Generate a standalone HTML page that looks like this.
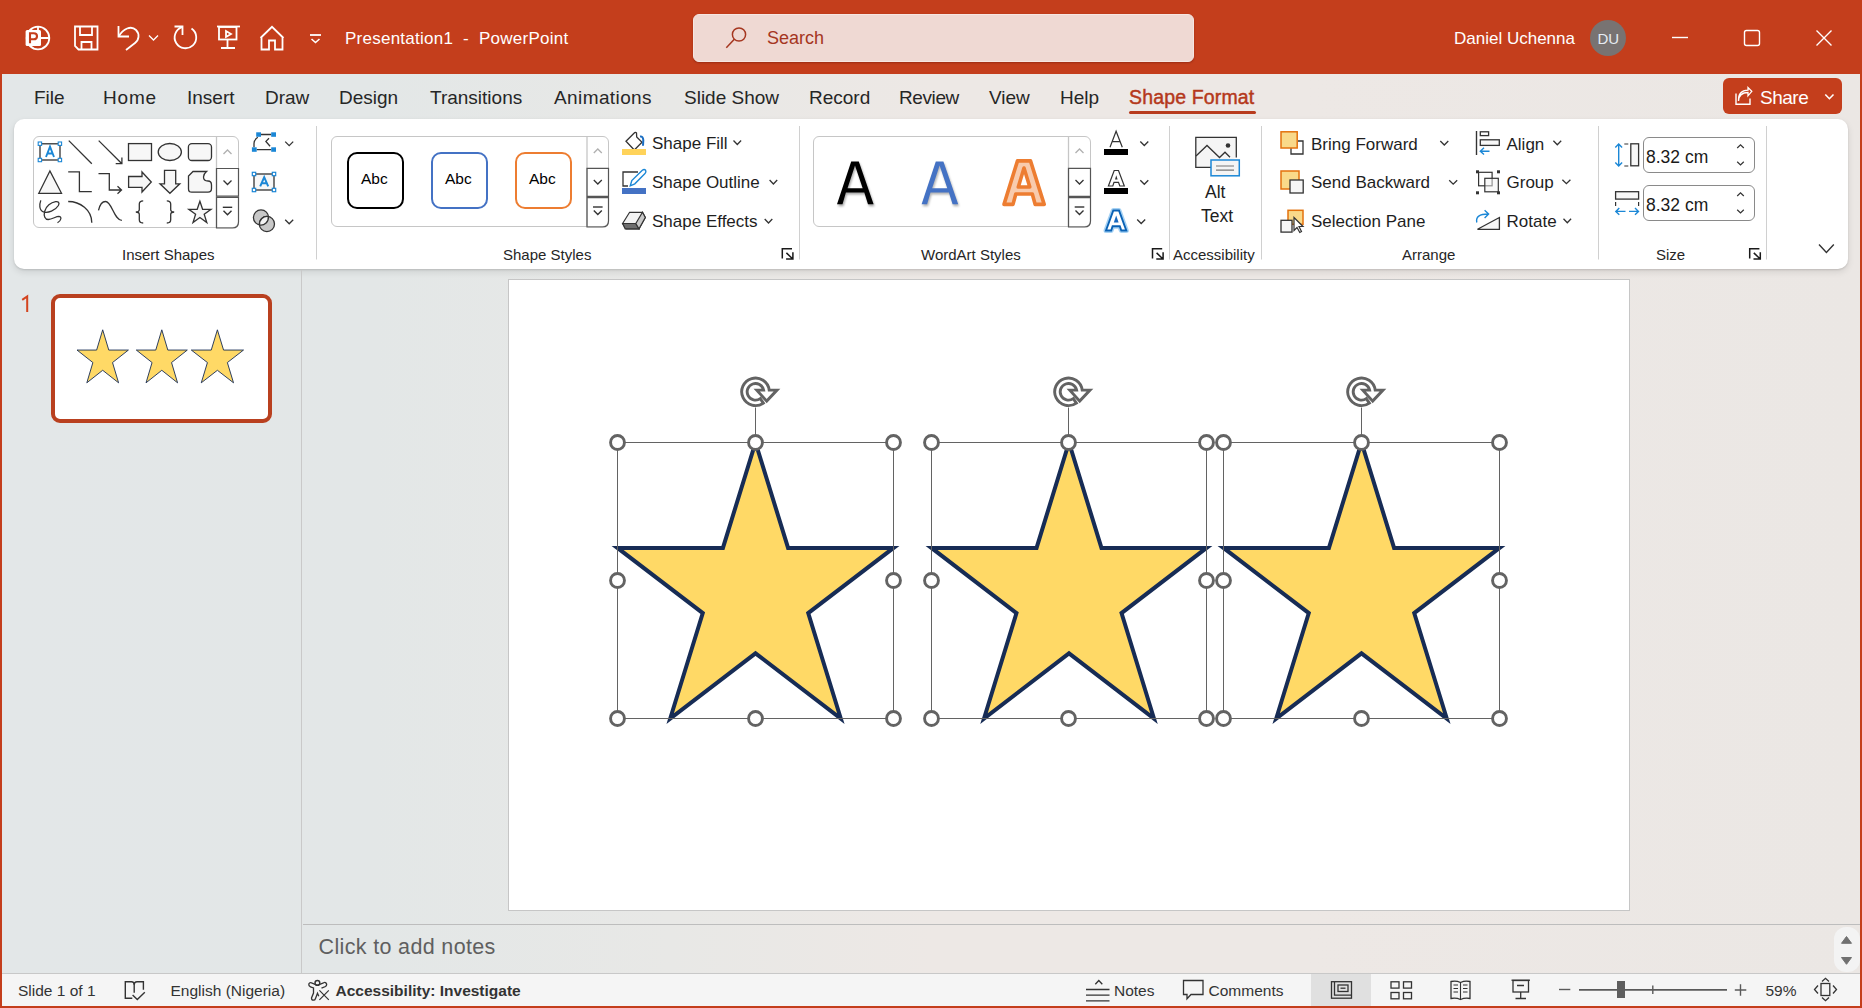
<!DOCTYPE html>
<html><head><meta charset="utf-8">
<style>
*{margin:0;padding:0;box-sizing:border-box}
html,body{width:1862px;height:1008px;overflow:hidden}
body{position:relative;font-family:"Liberation Sans",sans-serif;background:linear-gradient(90deg,#e3e7e8 0%,#e3e7e7 20%,#e8e8e6 36%,#ede8e5 50%,#ede8e5 70%,#ebe7e4 100%);color:#262626}
.a{position:absolute}
.t{position:absolute;white-space:nowrap;line-height:1}
#title{left:0;top:0;width:1862px;height:74px;background:#c43e1c}
.wt{color:#fff}
.tab{font-size:19px;color:#262626;top:88px}
svg{position:absolute;overflow:visible}
.lbl{font-size:15px;color:#262626}
.btn{font-size:17px;color:#1e1e1e}
.st{font-size:15.5px;color:#333}
</style></head><body>
<!-- title bar -->
<div id="title" class="a"></div>
<div class="a" style="left:0;top:0;width:2px;height:1008px;background:#c43e1c"></div>
<div class="a" style="left:1860px;top:0;width:2px;height:1008px;background:#c43e1c"></div>
<div class="a" style="left:0;top:1006px;width:1862px;height:2px;background:#c43e1c"></div>

<!-- QAT icons -->
<svg style="left:0;top:0" width="1862" height="74" fill="none" stroke="#fff" stroke-width="1.8">
  <!-- ppt logo -->
  <circle cx="38" cy="38" r="11.3"/>
  <path d="M38 26.7V38H49.3" />
  <rect x="25.6" y="30" width="15.4" height="16" rx="1.5" fill="#fff" stroke="none"/>
  <path d="M30 43.3V33.2H33.8Q37 33.2 37 36.2Q37 39.3 33.8 39.3H30" stroke="#c43e1c" stroke-width="2.1"/>
  <!-- save -->
  <path d="M75 26.5H97.5V49.5H78.5L75 46Z"/>
  <path d="M80 26.5V35H92V26.5"/>
  <path d="M81.5 49.5V42H91.5V49.5"/>
  <!-- undo -->
  <path d="M118.5 26V36.5H129"/>
  <path d="M119 36C123 29 131 25 136 30C140 34 139 40 135 43L126 50"/>
  <path d="M149 35.5L153.5 40L158 35.5" stroke-width="1.3"/>
  <!-- redo -->
  <path d="M174.5 26.5H182.5V35"/>
  <path d="M182 27.2A10.8 10.8 0 1 0 191.5 28.5"/>
  <!-- present -->
  <path d="M217 26.5H240"/>
  <rect x="219" y="27" width="17.5" height="12.5"/>
  <path d="M227.5 39.5V48M221 48H235"/>
  <path d="M226 31V37L231 34Z"/>
  <!-- home -->
  <path d="M260.5 38L272 26.8L283.5 38M261.5 37V49.5H269V40.5H275V49.5H282.5V37"/>
  <!-- customize -->
  <path d="M310 35H321" stroke-width="1.8"/>
  <path d="M311.5 39L315.5 42.5L319.5 39" stroke-width="1.6"/>
</svg>
<div class="t wt" style="left:345px;top:30px;font-size:17px;letter-spacing:0.25px">Presentation1&nbsp;&nbsp;-&nbsp;&nbsp;PowerPoint</div>

<!-- search -->
<div class="a" style="left:693px;top:14px;width:501px;height:48px;border-radius:6px;background:#efd9d3;border:1px solid #f6e6e2;box-shadow:0 1px 2px rgba(60,0,0,0.3)"></div>
<svg style="left:0;top:0" width="1" height="1" fill="none" stroke="#a5361f" stroke-width="1.5">
  <circle cx="739" cy="34.5" r="6.6"/>
  <path d="M734.3 39.2L726.3 47.7"/>
</svg>
<div class="t" style="left:767px;top:29px;font-size:18px;color:#a5361f">Search</div>

<div class="t wt" style="left:1454px;top:30px;font-size:17px">Daniel Uchenna</div>
<div class="a" style="left:1590px;top:20px;width:36px;height:36px;border-radius:50%;background:#787372"></div>
<div class="t" style="left:1597.5px;top:30.9px;font-size:15px;color:#e6ecf2">DU</div>
<svg style="left:0;top:0" width="1" height="1" fill="none" stroke="#fff" stroke-width="1.4">
  <path d="M1672 37.5H1688"/>
  <rect x="1744.5" y="30.5" width="15" height="15" rx="2"/>
  <path d="M1816.5 30.5L1831.5 45.5M1831.5 30.5L1816.5 45.5"/>
</svg>

<!-- tabs -->
<div class="t tab" style="left:34px">File</div>
<div class="t tab" style="left:103px;letter-spacing:0.8px">Home</div>
<div class="t tab" style="left:187px">Insert</div>
<div class="t tab" style="left:265px">Draw</div>
<div class="t tab" style="left:339px">Design</div>
<div class="t tab" style="left:430px">Transitions</div>
<div class="t tab" style="left:554px;letter-spacing:0.4px">Animations</div>
<div class="t tab" style="left:684px">Slide Show</div>
<div class="t tab" style="left:809px">Record</div>
<div class="t tab" style="left:899px;letter-spacing:-0.4px">Review</div>
<div class="t tab" style="left:989px">View</div>
<div class="t tab" style="left:1060px">Help</div>
<div class="t tab" style="left:1129px;top:88.4px;font-size:19.5px;color:#b5381b;-webkit-text-stroke:0.45px #b5381b;letter-spacing:0.15px">Shape Format</div>
<div class="a" style="left:1129px;top:111px;width:127px;height:3px;border-radius:2px;background:#b83b1d"></div>


<!-- RIBBON -->
<div id="ribbon" class="a" style="left:14px;top:119px;width:1834px;height:150px;background:#fff;border-radius:10px;box-shadow:0 1px 2px rgba(0,0,0,0.12),0 3px 7px rgba(0,0,0,0.10)"></div>

<!-- RIB1 -->
<!-- Insert shapes group -->
<div class="a" style="left:33px;top:136px;width:206px;height:92px;border:1px solid #c6c6c6;border-radius:6px;background:#fff"></div>
<svg style="left:0;top:0" width="1" height="1" fill="none" stroke="#333" stroke-width="1.3">
  <!-- scroll column -->
  <path d="M216.5 136.5V228" stroke="#c6c6c6"/>
  <path d="M216.5 168.5H238.5V196.20000000000002H216.5Z" stroke="#555" stroke-width="1.2"/>
  <path d="M216.5 197.4H238.5V222Q238.5 228 232.5 228H216.5Z" stroke="#555" stroke-width="1.2"/>
  <path d="M223.5 154L227.5 150L231.5 154" stroke="#b0b0b0" stroke-width="1.3"/>
  <path d="M223.5 180.5L227.5 184.5L231.5 180.5" stroke="#333" stroke-width="1.3"/>
  <path d="M222.8 207.3H232.2" stroke="#333" stroke-width="1.4"/>
  <path d="M223.5 210.8L227.5 214.8L231.5 210.8" stroke="#333" stroke-width="1.4"/>
  <!-- row0 -->
  <rect x="40" y="143.8" width="20" height="16.2" stroke="#333" stroke-width="1.3"/>
  <g fill="#fff" stroke="#1b87d6" stroke-width="1.1">
    <rect x="38.2" y="142" width="3.4" height="3.4"/><rect x="58.2" y="142" width="3.4" height="3.4"/>
    <rect x="38.2" y="158.3" width="3.4" height="3.4"/><rect x="58.2" y="158.3" width="3.4" height="3.4"/>
  </g>
  <path d="M46 157L50 146.6L54 157M47.4 153.5H52.6" stroke="#1b87d6" stroke-width="1.9"/>
  <path d="M68.8 140.6L91.8 163.7"/>
  <path d="M98.7 140.6L121.9 163.7M121.9 157.5V163.7H115.7"/>
  <rect x="128.5" y="143.6" width="23" height="16.9" fill="#f7f7f7"/>
  <ellipse cx="169.8" cy="152" rx="11.6" ry="8.5" fill="#f7f7f7"/>
  <rect x="188.4" y="143.6" width="23.1" height="16.9" rx="3.5" fill="#f7f7f7"/>
  <!-- row1 -->
  <path d="M49.9 171L38.8 193.3H61.5Z" fill="#f7f7f7"/>
  <path d="M68.2 171.9H79.4V191.7H91.8"/>
  <path d="M98.5 173.7H109.3V190H121.5M117.5 186.3L121.5 190L117.5 193.7"/>
  <path d="M128.6 176.5H142V172L151.3 182L142 192V187.3H128.6Z" fill="#f7f7f7"/>
  <path d="M164.5 170.3H175.7V183.8H179.8L169.9 193.3L160 183.8H164.5Z" fill="#f7f7f7"/>
  <path d="M193 171.5H206.5Q203.5 174 203.5 177Q203.5 181 208 181Q211.5 181 211.5 185V188.5Q211.5 192.2 208 192.2H191.8Q188.5 192.2 188.5 189V176Z" fill="#f7f7f7"/>
  <!-- row2 -->
  <path d="M40.8 200.4C39.5 204 38.5 210.5 44.2 212.2C48 213 55 211 58.4 205.5C60 202.5 58 201.3 55.6 201.7C51 202.5 46 206 44.6 211.5C43.5 216 45 219.5 48.3 219.5C52 219.5 56 216.3 58.8 216.3C62 216.5 61.5 220.5 57.5 222.7"/>
  <path d="M68.2 201.5C80 201.5 91.8 210 91.8 222.7"/>
  <path d="M98.5 210.3C100 204 103 201.5 105.5 201.5C112 201.5 114 220.4 121.9 220.4"/>
  <path d="M143.2 200.8Q139.3 200.8 139.3 204V209.5Q139.3 212 135.8 212Q139.3 212 139.3 214.5V219.8Q139.3 223 143.2 223"/>
  <path d="M166.8 200.8Q170.7 200.8 170.7 204V209.5Q170.7 212 174.2 212Q170.7 212 170.7 214.5V219.8Q170.7 223 166.8 223"/>
  <path d="M199.9 201.2L202.6 209.3H211L204.2 214.3L206.8 222.6L199.9 217.5L193 222.6L195.6 214.3L188.8 209.3H197.2Z" fill="#f7f7f7"/>
  <!-- edit shape -->
  <path d="M261 134.5H271.2M256.7 149.6H271.2M257.8 137.3Q254 140 254 143.5V147.3M269 138.2L265.9 141.4L270.1 146.2" stroke="#333" stroke-width="1.3"/>
  <g fill="#1b87d6" stroke="none">
    <rect x="256.2" y="132.3" width="4.8" height="4.5"/><rect x="271.2" y="132.3" width="4.8" height="4.5"/>
    <rect x="251.9" y="147.3" width="4.8" height="4.5"/><rect x="271.2" y="147.3" width="4.8" height="4.5"/>
  </g>
  <path d="M285.2 141.6L289.2 145.6L293.2 141.6"/>
  <!-- text box -->
  <rect x="254" y="174" width="20" height="16" fill="#f7f7f7" stroke="#333" stroke-width="1.3"/>
  <g fill="#fff" stroke="#1b87d6" stroke-width="1.2">
    <rect x="252.3" y="172.3" width="3.4" height="3.4"/><rect x="272.3" y="172.3" width="3.4" height="3.4"/>
    <rect x="252.3" y="188.3" width="3.4" height="3.4"/><rect x="272.3" y="188.3" width="3.4" height="3.4"/>
  </g>
  <path d="M260.2 186.4L264.2 177.2L268.2 186.4M261.6 183.3H266.8" stroke="#1b87d6" stroke-width="2"/>
  <!-- merge shapes -->
  <circle cx="261" cy="217.5" r="7.6" fill="#c8c8c8" stroke="#333" stroke-width="1.3"/>
  <circle cx="266.9" cy="224" r="7.6" fill="#c8c8c8" stroke="#333" stroke-width="1.3"/>
  <path d="M268.3 216.5A7.6 7.6 0 0 1 259.6 225A7.6 7.6 0 0 1 268.3 216.5Z" fill="#f3f3f3" stroke="#333" stroke-width="1.3"/>
  <path d="M285.2 219.8L289.2 223.8L293.2 219.8"/>
  <!-- separator -->
  <path d="M316.5 126V259.5" stroke="#d0d0d0" stroke-width="1"/>
</svg>
<div class="t lbl" style="left:122px;top:247px">Insert Shapes</div>
<!-- /RIB1 -->
<!-- RIB2 -->
<!-- Shape styles group -->
<div class="a" style="left:331px;top:136px;width:278px;height:91px;border:1px solid #c6c6c6;border-radius:6px;background:#fff"></div>
<div class="a" style="left:346.5px;top:152.3px;width:57px;height:57px;border:2.3px solid #000;border-radius:10px"></div>
<div class="a" style="left:430.5px;top:152.3px;width:57px;height:57px;border:2.3px solid #4472c4;border-radius:10px"></div>
<div class="a" style="left:514.5px;top:152.3px;width:57px;height:57px;border:2.3px solid #ed7d31;border-radius:10px"></div>
<div class="t" style="left:361px;top:171px;font-size:15.5px;color:#000">Abc</div>
<div class="t" style="left:445px;top:171px;font-size:15.5px;color:#000">Abc</div>
<div class="t" style="left:529px;top:171px;font-size:15.5px;color:#000">Abc</div>
<svg style="left:0;top:0" width="1" height="1" fill="none" stroke="#333" stroke-width="1.3">
  <path d="M587 136.5V227" stroke="#c6c6c6"/>
  <path d="M587 168.3H608.5V196.4H587Z" stroke="#555" stroke-width="1.2"/>
  <path d="M587 197.6H608.5V221Q608.5 227 602.5 227H587Z" stroke="#555" stroke-width="1.2"/>
  <path d="M593.8 153L597.8 149L601.8 153" stroke="#b0b0b0"/>
  <path d="M593.8 180L597.8 184L601.8 180"/>
  <path d="M593 207H602.6" stroke-width="1.4"/>
  <path d="M593.8 210.5L597.8 214.5L601.8 210.5" stroke-width="1.4"/>
  <!-- shape fill icon -->
  <path d="M626 141.3L634 133.2Q635.5 131.8 636.5 133L636.7 137L642 142.3L634.3 150L626 141.3Z" stroke="#333" stroke-width="1.3"/>
  <path d="M640 136.5Q643 136 643.3 140L643 145.8" stroke="#1b6ec2" stroke-width="2"/>
  <rect x="622" y="149" width="24" height="6" fill="#ffd35a" stroke="none"/>
  <path d="M733.5 140.5L737.3 144.5L741.1 140.5"/>
  <!-- shape outline icon -->
  <path d="M638 172H623V186H628" stroke="#333" stroke-width="1.3"/>
  <path d="M630.3 185.8L631.8 180.5L642.3 170.2Q644.3 168.7 645.6 170.3Q646.5 172 645 173.5L634.8 183.8Z" stroke="#1b87d6" stroke-width="1.4"/>
  <rect x="622" y="188" width="24" height="6" fill="#4472c4" stroke="none"/>
  <path d="M769.6 180L773.4 184L777.2 180"/>
  <!-- shape effects icon -->
  <path d="M622.6 223.5L629.6 212.3H642.5L645.3 217.5L639 228.8H626.2Z" fill="#f3f3f3" stroke="#333" stroke-width="1.2"/>
  <path d="M622.6 223.5L625.2 228.8H639L635.8 223.5Z" fill="#6e6e6e" stroke="#333" stroke-width="1.2"/>
  <path d="M635.8 223.5L642.5 212.3L645.3 217.5L639 228.8Z" fill="#c9c9c9" stroke="#333" stroke-width="1.2"/>
  <path d="M764.7 219L768.5 223L772.3 219"/>
  <!-- launcher -->
    <path d="M782.3 258.5V248.8H792.0M786.4 252.9L792.8 259.0M792.9 252.3V259.1H786.0999999999999" stroke="#1a1a1a" stroke-width="1.5"/>
  <path d="M799.5 126V259.5" stroke="#d0d0d0" stroke-width="1"/>
</svg>
<div class="t btn" style="left:652px;top:135.4px">Shape Fill</div>
<div class="t btn" style="left:652px;top:174.4px">Shape Outline</div>
<div class="t btn" style="left:652px;top:213.1px">Shape Effects</div>
<div class="t lbl" style="left:503px;top:246.5px">Shape Styles</div>

<!-- WordArt group -->
<div class="a" style="left:813px;top:136px;width:278px;height:91px;border:1px solid #c6c6c6;border-radius:6px;background:#fff"></div>
<svg style="left:0;top:0" width="1" height="1">
  <path d="M837 204.3L851.2 161.4H858.8L873.6 204.3H868L864.3 192.5H845.9L842.5 204.3ZM847.5 188.2H862.7L855 165.5Z" fill="#000" fill-rule="evenodd" style="filter:drop-shadow(1px 2px 1.2px rgba(0,0,0,0.35))"/>
  <path transform="translate(84.6 0)" d="M837 204.3L851.2 161.4H858.8L873.6 204.3H868L864.3 192.5H845.9L842.5 204.3ZM847.5 188.2H862.7L855 165.5Z" fill="#4472c4" fill-rule="evenodd" style="filter:drop-shadow(1px 2px 1.2px rgba(0,0,0,0.3))"/>
  <path d="M1004 204.4L1017.5 160.9H1030.5L1044.2 204.4H1035.2L1032.3 194H1015.8L1013 204.4ZM1018.3 187H1029.8L1024 168Z" fill="#f8cbad" fill-rule="evenodd" stroke="#ed7d31" stroke-width="3.6" stroke-linejoin="round"/>
</svg>
<svg style="left:0;top:0" width="1" height="1" fill="none" stroke="#333" stroke-width="1.3">
  <path d="M1068.5 136.5V227" stroke="#c6c6c6"/>
  <path d="M1068.5 168.3H1090.5V196.4H1068.5Z" stroke="#555" stroke-width="1.2"/>
  <path d="M1068.5 197.6H1090.5V221Q1090.5 227 1084.5 227H1068.5Z" stroke="#555" stroke-width="1.2"/>
  <path d="M1075.5 153L1079.5 149L1083.5 153" stroke="#b0b0b0"/>
  <path d="M1075.5 180L1079.5 184L1083.5 180"/>
  <path d="M1074.7 207H1084.3" stroke-width="1.4"/>
  <path d="M1075.5 210.5L1079.5 214.5L1083.5 210.5" stroke-width="1.4"/>
  <!-- text fill -->
  <path d="M1110 147.3L1116.1 131.2L1122.3 147.3M1112.3 141.6H1120" stroke="#333" stroke-width="1.2"/>
  <rect x="1104" y="149" width="24" height="6" fill="#000" stroke="none"/>
  <path d="M1140.3 141.5L1144.3 145.5L1148.3 141.5"/>
  <!-- text outline -->
  <path d="M1108.4 186L1114.2 170.5H1118.5L1124.3 186H1119.8L1118.5 182.3H1114L1112.8 186Z" stroke="#333" stroke-width="1.2"/>
  <path d="M1115 179.6L1116.3 175.2L1117.6 179.6Z" fill="#333" stroke="none"/>
  <rect x="1104" y="188" width="24" height="6" fill="#000" stroke="none"/>
  <path d="M1140.3 180.3L1144.3 184.3L1148.3 180.3"/>
  <!-- text effects -->
  <path d="M1106 230.5L1113.3 210.5H1119L1126.3 230.5H1121.3L1119.8 226.3H1112.6L1111.2 230.5Z" stroke="#a6d2f4" stroke-width="5" stroke-linejoin="round"/>
  <path d="M1106 230.5L1113.3 210.5H1119L1126.3 230.5H1121.3L1119.8 226.3H1112.6L1111.2 230.5Z" fill="#fff" stroke="#0a62b5" stroke-width="1.9"/>
  <path d="M1113.8 222.5L1116.2 215.5L1118.6 222.5Z" fill="#1769c0" stroke="none"/>
  <path d="M1137.2 219.5L1141.2 223.5L1145.2 219.5"/>
  <!-- launcher -->
  <path d="M1152.5 258.5V248.8H1162.2M1156.6 252.9L1163.0 259.0M1163.1 252.3V259.1H1156.3" stroke="#1a1a1a" stroke-width="1.5"/>
  <path d="M1169.5 126V259.5" stroke="#d0d0d0" stroke-width="1"/>
  <!-- alt text icon -->
  <path d="M1218 167.3H1195.8V137.3H1236.3V157.5" stroke="#333" stroke-width="1.3" fill="#f5f5f5"/>
  <path d="M1196 156L1207 145.5L1219.5 157.5L1225 152.2L1230 157.3" stroke="#333" stroke-width="1.3"/>
  <circle cx="1228" cy="145.5" r="2.3" fill="#333" stroke="none"/>
  <rect x="1211" y="160" width="28.3" height="15.8" fill="#f5f5f5" stroke="#1b87d6" stroke-width="1.5"/>
  <path d="M1216 166H1234M1216 170.2H1234" stroke="#777" stroke-width="1.2"/>
  <path d="M1261.5 126V259.5" stroke="#d0d0d0" stroke-width="1"/>
</svg>
<div class="t btn" style="left:1205px;top:183.5px;font-size:17.5px">Alt</div>
<div class="t btn" style="left:1201px;top:207.5px;font-size:17.5px">Text</div>
<div class="t lbl" style="left:921px;top:246.5px">WordArt Styles</div>
<div class="t lbl" style="left:1173px;top:246.5px">Accessibility</div>
<!-- /RIB2 -->
<!-- RIB3 -->
<!-- Arrange group -->
<svg style="left:0;top:0" width="1" height="1" fill="none" stroke="#333" stroke-width="1.3">
  <!-- bring forward -->
  <path d="M1291 141V154H1303V141H1298" stroke="#333" stroke-width="1.3"/>
  <rect x="1281" y="131.8" width="16.2" height="16.2" fill="#f9d98a" stroke="#e3720e" stroke-width="1.5"/>
  <path d="M1440.3 141L1444.3 145L1448.3 141"/>
  <!-- send backward -->
  <rect x="1281" y="171" width="18" height="18" fill="#f9d98a" stroke="#e3720e" stroke-width="1.5"/>
  <rect x="1290" y="180" width="13.2" height="13" fill="#f7f7f7" stroke="#333" stroke-width="1.3"/>
  <path d="M1449.2 180.2L1453.2 184.2L1457.2 180.2"/>
  <!-- selection pane -->
  <rect x="1288" y="210.3" width="15" height="14" fill="#f9d98a" stroke="#e3720e" stroke-width="1.5"/>
  <rect x="1281" y="220.3" width="11" height="11.8" fill="#f7f7f7" stroke="#333" stroke-width="1.3"/>
  <path d="M1294 217.5V230.5L1297 227.5L1299.8 232.5L1301.5 231.5L1299 226.5H1303Z" fill="#fff" stroke="#333" stroke-width="1.2"/>
  <!-- align -->
  <path d="M1476.5 131V155" stroke-width="1.4"/>
  <rect x="1480.3" y="131.8" width="8.3" height="3.8"/>
  <rect x="1480.3" y="139.8" width="19" height="5.6" fill="#f7f7f7"/>
  <path d="M1489.5 151.2H1480.5M1484 147.8L1480.3 151.2L1484 154.6" stroke="#1b87d6" stroke-width="1.4"/>
  <path d="M1553.4 140.8L1557.3 144.8L1561.2 140.8"/>
  <!-- group -->
  <g fill="#333" stroke="none">
    <rect x="1476" y="170.3" width="3" height="3"/><rect x="1497" y="170.3" width="3" height="3"/>
    <rect x="1476" y="191.3" width="3" height="3"/><rect x="1497" y="191.3" width="3" height="3"/>
  </g>
  <rect x="1478.6" y="172.3" width="13.5" height="13.5" stroke-width="1.2"/>
  <rect x="1484.8" y="178.3" width="13.5" height="13.5" fill="#f3f3f3" fill-opacity="0.5" stroke-width="1.2"/>
  <path d="M1562.4 179.7L1566.4 183.7L1570.4 179.7"/>
  <!-- rotate -->
  <path d="M1477.5 229.3L1499.4 217.5V229.3Z" fill="#f7f7f7" stroke-width="1.3"/>
  <path d="M1476.8 222.5Q1475 214 1488.3 214M1484.6 210.3L1488.6 214L1484.6 218" stroke="#1b87d6" stroke-width="1.4"/>
  <path d="M1563.5 218.8L1567.3 222.8L1571.1 218.8"/>
  <path d="M1598.5 126V259.5" stroke="#d0d0d0" stroke-width="1"/>
  <!-- size icons -->
  <path d="M1618.7 144.5V165.8M1615.3 147.5L1618.7 144L1622.1 147.5M1615.3 162.5L1618.7 166L1622.1 162.5" stroke="#1b87d6" stroke-width="1.4"/>
  <path d="M1624.3 144H1628.3M1624.3 166H1628.3" stroke-width="1.2"/>
  <rect x="1630.8" y="143.8" width="7.8" height="22" fill="#f7f7f7"/>
  <rect x="1615.6" y="191.7" width="23" height="7.4" fill="#f7f7f7"/>
  <path d="M1615.6 202V206M1638.6 202V206" stroke-width="1.2"/>
  <path d="M1616 211.4H1625.5M1629 211.4H1638.4M1619.3 208L1615.8 211.4L1619.3 214.8M1635 208L1638.5 211.4L1635 214.8" stroke="#1b87d6" stroke-width="1.4"/>
  <!-- spinners -->
  <path d="M1737.2 148L1740.5 144.8L1743.8 148M1737.2 161.8L1740.5 165L1743.8 161.8" stroke-width="1.2"/>
  <path d="M1737.2 196L1740.5 192.8L1743.8 196M1737.2 209.8L1740.5 213L1743.8 209.8" stroke-width="1.2"/>
  <!-- launcher -->
  <path d="M1749.7 258.5V248.8H1759.4M1753.8 252.9L1760.2 259.0M1760.3 252.3V259.1H1753.5" stroke="#1a1a1a" stroke-width="1.5"/>
  <path d="M1766.5 126V259.5" stroke="#d0d0d0" stroke-width="1"/>
  <!-- collapse ribbon -->
  <path d="M1819 244.5L1826.4 252.5L1833.8 244.5" stroke-width="1.4"/>
</svg>
<div class="a" style="left:1643px;top:137px;width:112px;height:36px;border:1px solid #8a8a8a;border-radius:6px"></div>
<div class="a" style="left:1643px;top:185px;width:112px;height:36px;border:1px solid #8a8a8a;border-radius:6px"></div>
<div class="t btn" style="left:1646px;top:148.7px;font-size:17.5px;color:#1a1a1a">8.32 cm</div>
<div class="t btn" style="left:1646px;top:196.6px;font-size:17.5px;color:#1a1a1a">8.32 cm</div>
<div class="t btn" style="left:1311px;top:135.6px">Bring Forward</div>
<div class="t btn" style="left:1311px;top:174.4px">Send Backward</div>
<div class="t btn" style="left:1311px;top:212.8px">Selection Pane</div>
<div class="t btn" style="left:1506.5px;top:135.6px">Align</div>
<div class="t btn" style="left:1506.5px;top:173.8px">Group</div>
<div class="t btn" style="left:1506.5px;top:212.8px">Rotate</div>
<div class="t lbl" style="left:1402px;top:246.5px">Arrange</div>
<div class="t lbl" style="left:1656px;top:246.5px">Size</div>

<!-- share -->
<div class="a" style="left:1723px;top:78px;width:119px;height:36px;border-radius:6px;background:#c43e1c"></div>
<svg style="left:0;top:0" width="1" height="1" fill="none" stroke="#fff" stroke-width="1.4">
  <path d="M1736 93.5V104.3H1750V98.5"/>
  <path d="M1738.5 101Q1739 92.5 1748 92.5V95.8L1751.8 91.3L1748 87.5V90.2Q1738 90.5 1738.5 101Z" stroke-width="1.3"/>
  <path d="M1825.3 94.5L1829.4 98.7L1833.5 94.5" stroke-width="1.6"/>
</svg>
<div class="t" style="left:1760px;top:87.8px;font-size:19px;color:#fff;letter-spacing:-0.5px">Share</div>
<!-- /RIB3 -->
<!-- thumbnail pane -->
<svg style="left:0;top:0" width="1" height="1" fill="none" stroke="#d3441f" stroke-width="2"><path d="M22.2 299.9L27.2 296.5V312"/></svg>
<div class="a" style="left:51px;top:294px;width:221px;height:129px;border:4px solid #b9401f;border-radius:9px;background:#fff"></div>
<svg style="left:0;top:0" width="1" height="1">
<path d="M102.70 329.80 L108.77 350.05 L128.40 350.05 L112.52 362.55 L118.58 382.80 L102.70 370.29 L86.82 382.80 L92.88 362.55 L77.00 350.05 L96.63 350.05Z" fill="#ffd966" stroke="#172c55" stroke-width="0.9" stroke-miterlimit="10"/>
<path d="M161.80 329.80 L167.82 350.05 L187.30 350.05 L171.54 362.55 L177.56 382.80 L161.80 370.29 L146.04 382.80 L152.06 362.55 L136.30 350.05 L155.78 350.05Z" fill="#ffd966" stroke="#172c55" stroke-width="0.9" stroke-miterlimit="10"/>
<path d="M217.40 329.80 L223.56 350.05 L243.50 350.05 L227.37 362.55 L233.53 382.80 L217.40 370.29 L201.27 382.80 L207.43 362.55 L191.30 350.05 L211.24 350.05Z" fill="#ffd966" stroke="#172c55" stroke-width="0.9" stroke-miterlimit="10"/>
</svg>
<!-- slide pane -->
<div class="a" style="left:301px;top:270px;width:1px;height:703px;background:#c9c9c9"></div>
<div class="a" style="left:508px;top:279px;width:1122px;height:632px;background:#fff;border:1px solid #c6c6c6"></div>

<!-- stars -->
<svg style="left:0;top:0" width="1862" height="1008">
<path d="M755.50 442.50 L788.07 547.93 L893.50 547.93 L808.22 613.07 L840.78 718.50 L755.50 653.36 L670.22 718.50 L702.78 613.07 L617.50 547.93 L722.93 547.93Z" fill="#ffd966" stroke="#172c55" stroke-width="4" stroke-linejoin="miter" stroke-miterlimit="10"/>
<path d="M1069.00 442.50 L1101.45 547.93 L1206.50 547.93 L1121.53 613.07 L1153.97 718.50 L1069.00 653.36 L984.02 718.50 L1016.48 613.07 L931.50 547.93 L1036.55 547.93Z" fill="#ffd966" stroke="#172c55" stroke-width="4" stroke-linejoin="miter" stroke-miterlimit="10"/>
<path d="M1361.50 442.50 L1394.07 547.93 L1499.50 547.93 L1414.22 613.07 L1446.78 718.50 L1361.50 653.36 L1276.22 718.50 L1308.78 613.07 L1223.50 547.93 L1328.93 547.93Z" fill="#ffd966" stroke="#172c55" stroke-width="4" stroke-linejoin="miter" stroke-miterlimit="10"/>
<rect x="617.5" y="442.5" width="276.0" height="276.0" fill="none" stroke="#636363" stroke-width="1"/><path d="M755.5 442.5V407.5" stroke="#636363" stroke-width="1"/><circle cx="617.5" cy="442.5" r="6.95" fill="#fff" stroke="#636363" stroke-width="2.9"/><circle cx="755.5" cy="442.5" r="6.95" fill="#fff" stroke="#636363" stroke-width="2.9"/><circle cx="893.5" cy="442.5" r="6.95" fill="#fff" stroke="#636363" stroke-width="2.9"/><circle cx="617.5" cy="580.5" r="6.95" fill="#fff" stroke="#636363" stroke-width="2.9"/><circle cx="893.5" cy="580.5" r="6.95" fill="#fff" stroke="#636363" stroke-width="2.9"/><circle cx="617.5" cy="718.5" r="6.95" fill="#fff" stroke="#636363" stroke-width="2.9"/><circle cx="755.5" cy="718.5" r="6.95" fill="#fff" stroke="#636363" stroke-width="2.9"/><circle cx="893.5" cy="718.5" r="6.95" fill="#fff" stroke="#636363" stroke-width="2.9"/><path transform="translate(755.5 391.8)" d="M7.9 11.3A13.8 13.8 0 1 1 13.7 -1.7L21.5 -1.7L11.2 9.3L1.3 -1.7L8.1 -1.7A8.3 8.3 0 1 0 4.76 6.8Z" fill="#fff" stroke="#636363" stroke-width="2.9" stroke-linejoin="miter"/>
<rect x="931.5" y="442.5" width="275.0" height="276.0" fill="none" stroke="#636363" stroke-width="1"/><path d="M1068.5 442.5V407.5" stroke="#636363" stroke-width="1"/><circle cx="931.5" cy="442.5" r="6.95" fill="#fff" stroke="#636363" stroke-width="2.9"/><circle cx="1068.5" cy="442.5" r="6.95" fill="#fff" stroke="#636363" stroke-width="2.9"/><circle cx="1206.5" cy="442.5" r="6.95" fill="#fff" stroke="#636363" stroke-width="2.9"/><circle cx="931.5" cy="580.5" r="6.95" fill="#fff" stroke="#636363" stroke-width="2.9"/><circle cx="1206.5" cy="580.5" r="6.95" fill="#fff" stroke="#636363" stroke-width="2.9"/><circle cx="931.5" cy="718.5" r="6.95" fill="#fff" stroke="#636363" stroke-width="2.9"/><circle cx="1068.5" cy="718.5" r="6.95" fill="#fff" stroke="#636363" stroke-width="2.9"/><circle cx="1206.5" cy="718.5" r="6.95" fill="#fff" stroke="#636363" stroke-width="2.9"/><path transform="translate(1068.5 391.8)" d="M7.9 11.3A13.8 13.8 0 1 1 13.7 -1.7L21.5 -1.7L11.2 9.3L1.3 -1.7L8.1 -1.7A8.3 8.3 0 1 0 4.76 6.8Z" fill="#fff" stroke="#636363" stroke-width="2.9" stroke-linejoin="miter"/>
<rect x="1223.5" y="442.5" width="276.0" height="276.0" fill="none" stroke="#636363" stroke-width="1"/><path d="M1361.5 442.5V407.5" stroke="#636363" stroke-width="1"/><circle cx="1223.5" cy="442.5" r="6.95" fill="#fff" stroke="#636363" stroke-width="2.9"/><circle cx="1361.5" cy="442.5" r="6.95" fill="#fff" stroke="#636363" stroke-width="2.9"/><circle cx="1499.5" cy="442.5" r="6.95" fill="#fff" stroke="#636363" stroke-width="2.9"/><circle cx="1223.5" cy="580.5" r="6.95" fill="#fff" stroke="#636363" stroke-width="2.9"/><circle cx="1499.5" cy="580.5" r="6.95" fill="#fff" stroke="#636363" stroke-width="2.9"/><circle cx="1223.5" cy="718.5" r="6.95" fill="#fff" stroke="#636363" stroke-width="2.9"/><circle cx="1361.5" cy="718.5" r="6.95" fill="#fff" stroke="#636363" stroke-width="2.9"/><circle cx="1499.5" cy="718.5" r="6.95" fill="#fff" stroke="#636363" stroke-width="2.9"/><path transform="translate(1361.5 391.8)" d="M7.9 11.3A13.8 13.8 0 1 1 13.7 -1.7L21.5 -1.7L11.2 9.3L1.3 -1.7L8.1 -1.7A8.3 8.3 0 1 0 4.76 6.8Z" fill="#fff" stroke="#636363" stroke-width="2.9" stroke-linejoin="miter"/>
</svg>
<!-- notes -->
<div class="a" style="left:303px;top:924px;width:1557px;height:1px;background:#bdbdbd"></div>
<div class="t" style="left:318.5px;top:936.8px;font-size:21.5px;color:#5f5f5f;letter-spacing:0.35px">Click to add notes</div>

<div class="a" style="left:2px;top:973px;width:1858px;height:33px;background:#f5f5f5"></div>
<!-- notes scroll -->
<div class="a" style="left:1834px;top:927px;width:25.5px;height:45px;border-radius:12px;background:#f3f3f3"></div>
<svg style="left:0;top:0" width="1" height="1" fill="#707070" stroke="#707070" stroke-width="1" stroke-linejoin="round">
  <path d="M1841.5 943.3L1846.5 936.5L1851.5 943.3Z"/>
  <path d="M1841.5 957.5L1846.5 964.3L1851.5 957.5Z"/>
</svg>
<!-- status bar -->
<div class="a" style="left:2px;top:973px;width:1858px;height:1px;background:#c8c8c8"></div>
<div class="a" style="left:1311px;top:974px;width:60px;height:32px;background:#e0e0e0"></div>
<div class="t st" style="left:18px;top:982.5px">Slide 1 of 1</div>
<div class="t st" style="left:170.5px;top:982.5px">English (Nigeria)</div>
<div class="t st" style="left:335.5px;top:982.5px;font-weight:bold">Accessibility: Investigate</div>
<div class="t st" style="left:1114px;top:982.5px">Notes</div>
<div class="t st" style="left:1208.5px;top:982.5px">Comments</div>
<div class="t st" style="left:1765.5px;top:982.5px">59%</div>
<svg style="left:0;top:0" width="1" height="1" fill="none" stroke="#333" stroke-width="1.3">
  <!-- book check -->
  <path d="M132.3 998.2H125.3V981.8H131.5Q134.2 981.8 134.2 984.8V992.8" stroke-width="1.4"/>
  <path d="M134.2 984.8Q134.2 981.8 137 981.8H143.4V989.8" stroke-width="1.4"/>
  <path d="M132.6 995L137.3 999.6L144.8 992.2" stroke-width="1.4"/>
  <!-- accessibility -->
  <circle cx="317.4" cy="982.9" r="2.4" stroke-width="1.4"/>
  <path d="M321.5 988.2L325.5 986.5Q327.5 985 326 983Q325 982 323.5 982.8L317.4 985.4L311.5 982.8Q309.5 982.3 308.8 984Q308.5 986 310.5 986.8L313.5 988V993L311.5 998Q311.5 1000.2 313.5 1000.2Q315 1000.2 315.5 998.5L317.5 993.3L318.8 996.3" stroke-width="1.3"/>
  <path d="M319.4 990.4L328.8 999.8M328.8 990.4L319.4 999.8" stroke-width="1.2"/>
  <!-- notes icon -->
  <path d="M1086 989.5H1109.5M1086 995.2H1109.5M1086 1000.9H1109.5"/>
  <path d="M1095.3 984.3L1098.8 980.5L1102.3 984.3"/>
  <!-- comments icon -->
  <path d="M1183.5 980.5H1203V994.5H1191L1187 998.8V994.5H1183.5Z"/>
  <!-- normal view -->
  <rect x="1331.5" y="981.7" width="20" height="16.5"/>
  <path d="M1334.5 982V995.2H1351.5"/>
  <rect x="1338" y="985" width="10" height="6.5"/>
  <path d="M1340.5 988.2H1345.5"/>
  <!-- slide sorter -->
  <rect x="1391" y="981.8" width="8" height="6.3"/><rect x="1403.5" y="981.8" width="8" height="6.3"/>
  <rect x="1391" y="992.5" width="8" height="6.3"/><rect x="1403.5" y="992.5" width="8" height="6.3"/>
  <!-- reading view -->
  <path d="M1451 981.5Q1456 980.3 1460.5 982.5Q1465 980.3 1470 981.5V998.5Q1465 997.5 1460.5 999.5Q1456 997.5 1451 998.5Z"/>
  <path d="M1460.5 982.5V999.5M1453.5 985H1458M1453.5 988.5H1458M1453.5 992H1458M1463 985H1467.5M1463 988.5H1467.5M1463 992H1467.5" stroke-width="1.1"/>
  <!-- presenter -->
  <path d="M1511.5 980.2H1530"/>
  <rect x="1513" y="980.5" width="15.5" height="11.5"/>
  <path d="M1517 985.5H1524M1520.7 992V998.5M1515.5 998.5H1526"/>
  <!-- zoom slider -->
  <path d="M1559 989.5H1570.3" stroke="#5a5a5a" stroke-width="1.4"/>
  <path d="M1579 989.8H1727" stroke="#5a5a5a" stroke-width="1.8"/>
  <path d="M1652.8 985.5V994" stroke="#5a5a5a" stroke-width="1.4"/>
  <rect x="1617" y="981" width="8" height="17" fill="#5e5e5e" stroke="none"/>
  <path d="M1734.8 990H1746.3M1740.5 984.3V995.7" stroke="#5a5a5a" stroke-width="1.4"/>
  <!-- fit -->
  <rect x="1821" y="983.5" width="8.8" height="12"/>
  <path d="M1818 985.5L1814.5 989.5L1818 993.5M1833 985.5L1836.5 989.5L1833 993.5M1822 981.5L1825.5 978.3L1829 981.5M1822 997.5L1825.5 1000.7L1829 997.5"/>
</svg>

</body></html>
